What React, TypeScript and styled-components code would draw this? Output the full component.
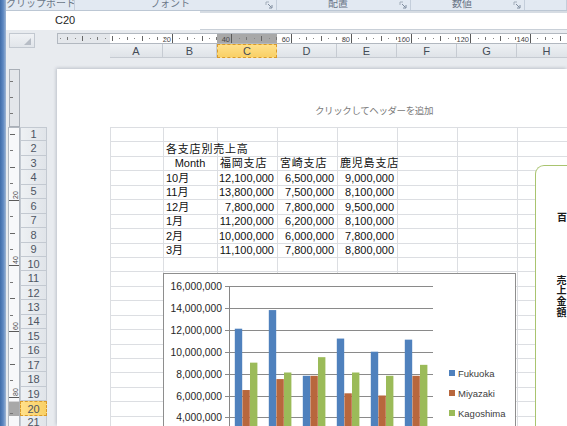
import React from "react";
import styled, { createGlobalStyle } from "styled-components";

const GlobalStyle = createGlobalStyle`
  html, body {
    margin: 0;
    padding: 0;
    background: #e8ebef;
  }
  body {
    font-family: "Liberation Sans", "Noto Sans CJK JP", sans-serif;
  }
`;

const COLS = [
  { name: "A", width: 53 },
  { name: "B", width: 54 },
  { name: "C", width: 60 },
  { name: "D", width: 60 },
  { name: "E", width: 60 },
  { name: "F", width: 60 },
  { name: "G", width: 60 },
  { name: "H", width: 60 },
];
const ROW_H = 14.45;
const ROW_COUNT = 21;
const SELECTED_COL = "C";
const SELECTED_ROW = 20;

type Align = "left" | "right" | "center";
type CellData = { text: string; align?: Align; jp?: boolean };

const MONTHS = ["10月", "11月", "12月", "1月", "2月", "3月"];
const FUKUOKA = [12.1, 13.8, 7.8, 11.2, 10.0, 11.1];
const MIYAZAKI = [6.5, 7.5, 7.8, 6.2, 6.0, 7.8];
const KAGOSHIMA = [9.0, 8.1, 9.5, 8.1, 7.8, 8.8];

const yen = (m: number) => Math.round(m * 1000000).toLocaleString("en-US");

const SHEET: Record<string, CellData> = {
  B2: { text: "各支店別売上高", jp: true },
  B3: { text: "Month", align: "center" },
  C3: { text: "福岡支店", jp: true },
  D3: { text: "宮崎支店", jp: true },
  E3: { text: "鹿児島支店", jp: true },
};
MONTHS.forEach((m, i) => {
  const r = i + 4;
  SHEET[`B${r}`] = { text: m };
  SHEET[`C${r}`] = { text: yen(FUKUOKA[i]), align: "right" };
  SHEET[`D${r}`] = { text: yen(MIYAZAKI[i]), align: "right" };
  SHEET[`E${r}`] = { text: yen(KAGOSHIMA[i]), align: "right" };
});

const SERIES = [
  { name: "Fukuoka", color: "#4f81bd", values: FUKUOKA },
  { name: "Miyazaki", color: "#b8673d", values: MIYAZAKI },
  { name: "Kagoshima", color: "#9bbb59", values: KAGOSHIMA },
];

/* ---------- window frame ---------- */

const Window = styled.div`
  width: 567px;
  height: 426px;
  overflow: hidden;
  display: flex;
  background: #e8ebef;
`;

const BlueStrip = styled.div`
  width: 6px;
  flex: none;
  background: linear-gradient(90deg, #3f6ca9 0%, #5f89c2 55%, #9fb6d4 100%);
`;

const Main = styled.div`
  flex: 1;
  min-width: 0;
  display: flex;
  flex-direction: column;
`;

/* ---------- ribbon group labels ---------- */

const RibbonGroups = styled.div`
  height: 11px;
  flex: none;
  display: flex;
  background: #e2e9f2;
  border-bottom: 1px solid #bcc7d4;
  box-sizing: border-box;
`;

const RibbonGroup = styled.div<{ $w?: number }>`
  ${(p) => (p.$w ? `width: ${p.$w}px; flex: none;` : "flex: 1;")}
  display: flex;
  align-items: flex-start;
  border-right: 1px solid #c4cedb;
  box-sizing: border-box;
  overflow: hidden;
`;

const GroupLabel = styled.span`
  flex: 1;
  text-align: center;
  font-family: "Noto Sans CJK JP", sans-serif;
  font-size: 10px;
  line-height: 10px;
  margin-top: -2px;
  color: #6b7788;
  white-space: nowrap;
`;

const Launcher = styled.svg`
  flex: none;
  margin: 1px 3px 0 0;
`;

const LauncherIcon = () => (
  <Launcher width="8" height="8" viewBox="0 0 8 8">
    <path d="M1 4V1h3" stroke="#a3aebb" fill="none" />
    <path d="M3 3l3.5 3.5M7 4v3H4" stroke="#7f8c9e" fill="none" />
  </Launcher>
);

/* ---------- formula bar ---------- */

const FormulaBar = styled.div`
  height: 19px;
  flex: none;
  display: flex;
  background: #ffffff;
`;

const NameBox = styled.div`
  width: 194px;
  flex: none;
  padding-left: 49px;
  box-sizing: border-box;
  font-size: 11px;
  line-height: 19px;
  color: #1e1e1e;
`;

const FormulaInput = styled.div`
  flex: 1;
  border-top: 2px solid #d6dce3;
  border-bottom: 1px solid #c9d0d8;
`;

/* ---------- workspace ---------- */

const Workspace = styled.div`
  flex: 1;
  min-height: 0;
  display: grid;
  grid-template-columns: 2px 12px 27px 10px minmax(0, 1fr);
  grid-template-rows: 3px 11px 14px 11px minmax(0, 1fr);
  overflow: hidden;
`;

const CornerBox = styled.div`
  grid-column: 2 / 4;
  grid-row: 2 / 4;
  width: 26px;
  height: 15px;
  margin-left: 1px;
  box-sizing: border-box;
  border: 1px solid #c2c8d0;
  background: linear-gradient(180deg, #f0f2f5, #e1e5ea);
  display: flex;
  justify-content: flex-end;
  align-items: flex-end;
  padding: 0 3px 2px 0;
`;

const HRulerWrap = styled.div`
  grid-column: 5;
  grid-row: 2;
  overflow: hidden;
`;

const ColHeaders = styled.div`
  grid-column: 5;
  grid-row: 3;
  display: flex;
  padding-left: 53px;
  overflow: hidden;
`;

const ColHeader = styled.div<{ $w: number; $selected?: boolean }>`
  width: ${(p) => p.$w}px;
  flex: none;
  box-sizing: border-box;
  display: flex;
  align-items: center;
  justify-content: center;
  font-size: 11px;
  color: #444b56;
  border-right: 1px solid #c6cbd2;
  border-bottom: 1px solid #c6cbd2;
  background: ${(p) =>
    p.$selected
      ? "linear-gradient(180deg, #ffe08a, #f9d066)"
      : "linear-gradient(180deg, #eef1f4, #dfe3e8)"};
  ${(p) => (p.$selected ? "border: 1px dashed #d99a2b;" : "")}
`;

const VRulerWrap = styled.div`
  grid-column: 2;
  grid-row: 5;
  overflow: hidden;
`;

const RowHeaders = styled.div`
  grid-column: 3;
  grid-row: 5;
  padding-top: 58px;
  display: flex;
  flex-direction: column;
  overflow: hidden;
`;

const RowHeader = styled.div<{ $selected?: boolean }>`
  height: ${ROW_H}px;
  flex: none;
  box-sizing: border-box;
  display: flex;
  align-items: center;
  justify-content: center;
  font-size: 11px;
  color: #4e5663;
  border: 1px solid #c3c9d1;
  border-top: none;
  background: ${(p) =>
    p.$selected
      ? "linear-gradient(90deg, #ffe08a, #f9d066)"
      : "linear-gradient(90deg, #eef1f4, #e0e4e9)"};
  ${(p) => (p.$selected ? "border: 1px dashed #d99a2b;" : "")}
  &:first-child {
    border-top: 1px solid #c3c9d1;
  }
`;

/* ---------- page ---------- */

const Page = styled.div`
  grid-column: 5;
  grid-row: 5;
  background: #ffffff;
  box-shadow: -1px -1px 3px rgba(80, 90, 110, 0.28);
  padding-left: 53px;
  overflow: hidden;
  display: flex;
  flex-direction: column;
`;

const PageHeader = styled.div`
  width: 528px;
  height: 58px;
  flex: none;
  box-sizing: border-box;
  padding-top: 35px;
  text-align: center;
  font-family: "Noto Sans CJK JP", sans-serif;
  font-size: 9.5px;
  letter-spacing: -0.4px;
  line-height: 12px;
  color: #7a7a7a;
`;

const SheetArea = styled.div`
  position: relative;
  width: 467px;
  flex: none;
`;

const CellGrid = styled.div`
  display: grid;
  grid-template-columns: ${COLS.map((c) => `${c.width}px`).join(" ")};
  grid-auto-rows: ${ROW_H}px;
  border-top: 1px solid #dcdee2;
  border-left: 1px solid #dcdee2;
  width: max-content;
`;

const Cell = styled.div<{ $align?: Align; $jp?: boolean }>`
  box-sizing: border-box;
  border-right: 1px solid #dcdee2;
  border-bottom: 1px solid #dcdee2;
  display: flex;
  align-items: flex-end;
  justify-content: ${(p) =>
    p.$align === "right" ? "flex-end" : p.$align === "center" ? "center" : "flex-start"};
  padding: 0 3px 1px 2px;
  font-size: 11px;
  line-height: 12px;
  letter-spacing: ${(p) => (p.$jp ? "0.8px" : "0")};
  white-space: nowrap;
  color: #111111;
  min-width: 0;
`;

/* ---------- chart ---------- */

const ChartBox = styled.div`
  position: absolute;
  left: 53px;
  top: 146px;
  width: 353px;
  height: 300px;
  box-sizing: border-box;
  border: 1px solid #8e8e8e;
  background: #ffffff;
  display: flex;
  align-items: flex-start;
`;

const Legend = styled.div`
  display: flex;
  flex-direction: column;
  gap: 8px;
  margin: 93px 0 0 5px;
`;

const LegendItem = styled.div`
  display: flex;
  align-items: center;
  gap: 3px;
  height: 12px;
  font-size: 9.5px;
  color: #404040;
`;

const Swatch = styled.span<{ $color: string }>`
  width: 6px;
  height: 6px;
  background: ${(p) => p.$color};
`;

const SideChart = styled.div`
  position: absolute;
  left: 425px;
  top: 38px;
  width: 60px;
  height: 300px;
  box-sizing: border-box;
  background: #ffffff;
  border-top: 1px solid #a9c46f;
  border-left: 1px solid #a9c46f;
  border-top-left-radius: 9px;
  display: flex;
  flex-direction: column;
  align-items: flex-start;
  padding-left: 21px;
  font-family: "Noto Sans CJK JP", sans-serif;
  font-weight: bold;
  color: #1a1a1a;
`;

const UnitLabel = styled.span`
  margin-top: 45px;
  font-size: 10px;
  line-height: 12px;
`;

const AxisTitle = styled.span`
  margin-top: 52px;
  margin-left: -3px;
  writing-mode: vertical-rl;
  font-size: 10px;
  letter-spacing: 0.6px;
`;

const GRID_TOP = 12;
const STEP = 21.9;
const AXIS_X = 65;
const CAT_W = 34;
const ZERO_Y = GRID_TOP + 8 * STEP;

const ChartPlot = () => {
  const lines = Array.from({ length: 9 }, (_, k) => 16 - k * 2);
  return (
    <svg width="280" height="260" style={{ flex: "none", display: "block" }}>
      {lines.map((v, k) => {
        const y = Math.round(GRID_TOP + k * STEP) + 0.5;
        return (
          <g key={v}>
            <line x1={61} x2={269} y1={y} y2={y} stroke="#8a8a8a" strokeWidth="1" />
            <text
              x={58}
              y={y + 3.6}
              textAnchor="end"
              fontSize="10.3"
              fontFamily="Liberation Sans, sans-serif"
              fill="#262626"
            >
              {yen(v)}
            </text>
          </g>
        );
      })}
      {FUKUOKA.map((_, i) =>
        SERIES.map((s, si) => {
          const h = s.values[i] * (STEP / 2);
          return (
            <rect
              key={`${i}-${si}`}
              x={AXIS_X + i * CAT_W + 5.8 + si * 7.6}
              y={ZERO_Y - h}
              width={7.4}
              height={h}
              fill={s.color}
            />
          );
        })
      )}
      <line x1={AXIS_X + 0.5} x2={AXIS_X + 0.5} y1={GRID_TOP} y2={ZERO_Y} stroke="#868686" />
    </svg>
  );
};

/* ---------- rulers ---------- */

const HRuler = () => {
  const W = 510;
  const zero = 55;
  const pxmm = 2.985;
  const marks: React.ReactNode[] = [];
  for (let mm = -17.5; zero + mm * pxmm < W; mm += 2.5) {
    const x = Math.round(zero + mm * pxmm) + 0.5;
    if (mm > 0 && mm % 20 === 0) {
      marks.push(<line key={`t${mm}`} x1={x} x2={x} y1={1} y2={10} stroke="#5a5a5a" />);
      marks.push(
        <text
          key={`l${mm}`}
          x={x - 1.5}
          y={8.5}
          textAnchor="end"
          fontSize="7.5"
          fontFamily="Liberation Sans, sans-serif"
          fill="#4a4a4a"
        >
          {mm}
        </text>
      );
    } else if (mm % 10 === 0) {
      marks.push(<line key={`t${mm}`} x1={x} x2={x} y1={3} y2={8} stroke="#666" />);
    } else if (mm % 5 === 0) {
      marks.push(<line key={`t${mm}`} x1={x} x2={x} y1={4} y2={7} stroke="#777" />);
    } else {
      marks.push(<line key={`t${mm}`} x1={x} x2={x} y1={5} y2={6} stroke="#888" />);
    }
  }
  return (
    <svg width={W} height="11" style={{ display: "block" }}>
      <rect x="0" y="0" width={W} height="11" fill="#ffffff" />
      <rect x="0" y="0" width="53" height="11" fill="#e4e7eb" />
      <rect x="160" y="0" width="60" height="11" fill="#a8a8a8" />
      <rect x="0.5" y="0.5" width={W} height="10" fill="none" stroke="#b2b8c0" />
      {marks}
    </svg>
  );
};

const VRuler = () => {
  const H = 360;
  const zero = 65;
  const pxmm = 3.285;
  const marks: React.ReactNode[] = [];
  for (let mm = -5; zero + mm * pxmm < H; mm += 5) {
    const y = Math.round(zero + mm * pxmm) + 0.5;
    if (zero + mm * pxmm < 59) continue;
    if (mm > 0 && mm % 20 === 0) {
      marks.push(<line key={`t${mm}`} x1={1} x2={11} y1={y} y2={y} stroke="#5a5a5a" />);
      marks.push(
        <text
          key={`l${mm}`}
          x={0}
          y={0}
          transform={`translate(9.5 ${y - 1.5}) rotate(-90)`}
          fontSize="7"
          fontFamily="Liberation Sans, sans-serif"
          fill="#4a4a4a"
        >
          {mm}
        </text>
      );
    } else if (mm % 10 === 0) {
      marks.push(<line key={`t${mm}`} x1={2} x2={7} y1={y} y2={y} stroke="#666" />);
    } else {
      marks.push(<line key={`t${mm}`} x1={2} x2={5} y1={y} y2={y} stroke="#777" />);
    }
  }
  const selTop = 58 + (SELECTED_ROW - 1) * ROW_H;
  return (
    <svg width="12" height={H} style={{ display: "block" }}>
      <rect x="1.5" y="0.5" width="10" height="57" fill="#e3e6ea" stroke="#a9afb7" />
      {[12, 28, 44].map((y) => (
        <line key={y} x1="2" x2="5" y1={y + 0.5} y2={y + 0.5} stroke="#777" />
      ))}
      <rect x="0.5" y="58.5" width="11" height={H} fill="#f7f8fa" stroke="#b2b8c0" />
      <rect x="1" y={selTop} width="10.5" height={ROW_H} fill="#a8a8a8" />
      {marks}
    </svg>
  );
};

/* ---------- app ---------- */

const App = () => {
  const rows = Array.from({ length: ROW_COUNT }, (_, i) => i + 1);
  return (
    <>
      <GlobalStyle />
      <Window>
        <BlueStrip />
        <Main>
          <RibbonGroups>
            <RibbonGroup $w={69}>
              <GroupLabel>クリップボード</GroupLabel>
              <LauncherIcon />
            </RibbonGroup>
            <RibbonGroup $w={202}>
              <GroupLabel>フォント</GroupLabel>
              <LauncherIcon />
            </RibbonGroup>
            <RibbonGroup $w={134}>
              <GroupLabel>配置</GroupLabel>
              <LauncherIcon />
            </RibbonGroup>
            <RibbonGroup $w={114}>
              <GroupLabel>数値</GroupLabel>
              <LauncherIcon />
            </RibbonGroup>
            <RibbonGroup />
          </RibbonGroups>
          <FormulaBar>
            <NameBox>C20</NameBox>
            <FormulaInput />
          </FormulaBar>
          <Workspace>
            <CornerBox>
              <svg width="7" height="7" viewBox="0 0 7 7">
                <path d="M7 0V7H0Z" fill="#b7bdc6" />
              </svg>
            </CornerBox>
            <HRulerWrap>
              <HRuler />
            </HRulerWrap>
            <ColHeaders>
              {COLS.map((c) => (
                <ColHeader key={c.name} $w={c.width} $selected={c.name === SELECTED_COL}>
                  {c.name}
                </ColHeader>
              ))}
            </ColHeaders>
            <VRulerWrap>
              <VRuler />
            </VRulerWrap>
            <RowHeaders>
              {rows.map((r) => (
                <RowHeader key={r} $selected={r === SELECTED_ROW}>
                  {r}
                </RowHeader>
              ))}
            </RowHeaders>
            <Page>
              <PageHeader>クリックしてヘッダーを追加</PageHeader>
              <SheetArea>
                <CellGrid>
                  {rows.map((r) =>
                    COLS.map((c) => {
                      const d = SHEET[`${c.name}${r}`];
                      return (
                        <Cell key={`${c.name}${r}`} $align={d?.align} $jp={d?.jp}>
                          {d?.text}
                        </Cell>
                      );
                    })
                  )}
                </CellGrid>
                <ChartBox>
                  <ChartPlot />
                  <Legend>
                    {SERIES.map((s) => (
                      <LegendItem key={s.name}>
                        <Swatch $color={s.color} />
                        {s.name}
                      </LegendItem>
                    ))}
                  </Legend>
                </ChartBox>
                <SideChart>
                  <UnitLabel>百</UnitLabel>
                  <AxisTitle>売上金額</AxisTitle>
                </SideChart>
              </SheetArea>
            </Page>
          </Workspace>
        </Main>
      </Window>
    </>
  );
};

export default App;
